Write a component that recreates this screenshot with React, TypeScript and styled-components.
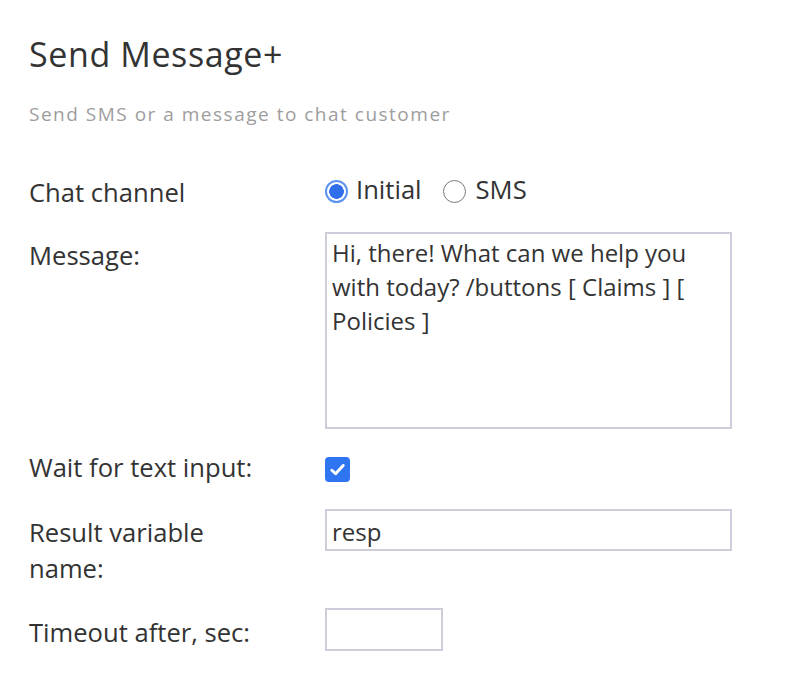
import React from "react";
import styled, { createGlobalStyle } from "styled-components";

const Global = createGlobalStyle`
  html, body { margin: 0; padding: 0; background: #ffffff; }
  body { font-family: "Open Sans", "Noto Sans", sans-serif; color: #333333; }
  * { box-sizing: border-box; }
`;

const Page = styled.div`
  padding: 34px 29px 40px 29px;
  font-size: 25.6px;
  line-height: 36px;
`;

const Title = styled.h1`
  margin: 0;
  font-size: 34px;
  font-weight: 400;
  line-height: 40px;
  letter-spacing: 0.6px;
  color: #333333;
`;

const Subtitle = styled.p`
  margin: 26px 0 44px 0;
  font-size: 19px;
  line-height: 28px;
  letter-spacing: 1.5px;
  color: #9d9d9d;
`;

const Form = styled.div`
  display: flex;
  flex-direction: column;
  gap: 21px;
`;

const Row = styled.div`
  display: grid;
  grid-template-columns: 296px 407px;
  align-items: start;
`;

const Label = styled.div<{ $pad?: number }>`
  padding-top: ${(p) => p.$pad ?? 0}px;
  color: #333333;
  max-width: 230px;
`;

const RadioGroup = styled.div`
  display: flex;
  align-items: center;
  gap: 21px;
  height: 36px;
`;

const RadioLabel = styled.label<{ $gap: number }>`
  display: flex;
  align-items: center;
  gap: ${(p) => p.$gap}px;
  cursor: pointer;
`;

const Radio = styled.input.attrs({ type: "radio" })`
  appearance: none;
  margin: 2px 0 0 0;
  width: 23px;
  height: 23px;
  border-radius: 50%;
  border: 1.5px solid #7a7a7a;
  background: #fff;
  &:checked {
    border: 2px solid #5b93f0;
    background: radial-gradient(circle, #2f6fec 0 7px, #ffffff 7.6px);
  }
`;

const TextArea = styled.textarea`
  display: block;
  width: 407px;
  height: 197px;
  margin: 0;
  padding: 2px 5px;
  border: 2px solid #cdcddb;
  font-family: inherit;
  font-size: 24px;
  line-height: 34px;
  color: #333333;
  resize: none;
  outline: none;
  overflow: hidden;
`;

const CheckCell = styled.div`
  padding-top: 2px;
`;

const Check = styled.span`
  display: inline-flex;
  align-items: center;
  justify-content: center;
  width: 25px;
  height: 25px;
  border-radius: 4px;
  background: #2f74f0;
`;

const TextInput = styled.input<{ $w: number; $h: number }>`
  display: block;
  width: ${(p) => p.$w}px;
  height: ${(p) => p.$h}px;
  margin: 0;
  padding: 2px 5px 0 5px;
  border: 2px solid #cdcddb;
  font-family: inherit;
  font-size: 24px;
  color: #333333;
  outline: none;
`;

export default function App() {
  return (
    <Page>
      <Global />
      <Title>Send Message+</Title>
      <Subtitle>Send SMS or a message to chat customer</Subtitle>
      <Form>
        <Row>
          <Label $pad={3}>Chat channel</Label>
          <RadioGroup>
            <RadioLabel $gap={8}>
              <Radio name="ch" defaultChecked />
              Initial
            </RadioLabel>
            <RadioLabel $gap={10}>
              <Radio name="ch" />
              SMS
            </RadioLabel>
          </RadioGroup>
        </Row>

        <Row>
          <Label $pad={6}>Message:</Label>
          <TextArea defaultValue="Hi, there! What can we help you with today? /buttons [ Claims ] [ Policies ]" />
        </Row>

        <Row>
          <Label $pad={0}>Wait for text input:</Label>
          <CheckCell>
            <Check>
              <svg width="19" height="19" viewBox="0 0 16 16" fill="none">
                <path d="M3.2 8.6 L6.4 11.6 L12.8 4.6" stroke="#fff" strokeWidth="2.5" strokeLinecap="round" strokeLinejoin="round" />
              </svg>
            </Check>
          </CheckCell>
        </Row>

        <Row>
          <Label $pad={6}>Result variable name:</Label>
          <TextInput $w={407} $h={42} defaultValue="resp" />
        </Row>

        <Row>
          <Label $pad={7}>Timeout after, sec:</Label>
          <TextInput $w={118} $h={43} defaultValue="" />
        </Row>
      </Form>
    </Page>
  );
}
